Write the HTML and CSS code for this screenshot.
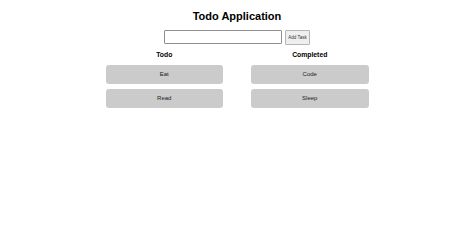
FILE: index.html
```html
<!DOCTYPE html>
<html>
<head>
<meta charset="utf-8">
<link rel="stylesheet" href="styles.css">
</head>
<body>
<div class="app">
  <h1 class="title">Todo Application</h1>
  <div class="add-row">
    <input class="task-input" type="text">
    <button class="add-btn">Add Task</button>
  </div>
  <div class="columns">
    <div class="column">
      <h2 class="col-title">Todo</h2>
      <div class="card">Eat</div>
      <div class="card">Read</div>
    </div>
    <div class="column">
      <h2 class="col-title">Completed</h2>
      <div class="card">Code</div>
      <div class="card">Sleep</div>
    </div>
  </div>
</div>
</body>
</html>
```
FILE: styles.css
```css
html, body {
  margin: 0;
  padding: 0;
  background: #ffffff;
}
body {
  font-family: "Liberation Sans", Arial, sans-serif;
  color: #000;
}
.app {
  display: flex;
  flex-direction: column;
  align-items: center;
  padding-top: 10px;
}
.title {
  margin: 0;
  font-size: 11px;
  line-height: 13px;
  font-weight: bold;
}
.add-row {
  display: flex;
  align-items: flex-start;
  gap: 3px;
  margin-top: 7px;
}
.task-input {
  box-sizing: border-box;
  width: 118px;
  height: 14px;
  margin: 0;
  padding: 0 2px;
  border: 1px solid #8f8f8f;
  border-radius: 1px;
  font-size: 6px;
}
.add-btn {
  box-sizing: border-box;
  height: 15px;
  width: 25px;
  margin: 0;
  padding: 0;
  border: 1px solid #b5b5b5;
  border-radius: 1px;
  background: #efefef;
  color: #333;
  font-family: "Liberation Sans", Arial, sans-serif;
  font-size: 4.5px;
  white-space: nowrap;
}
.columns {
  display: flex;
  gap: 28px;
  margin-top: 5px;
}
.column {
  width: 117.5px;
  display: flex;
  flex-direction: column;
  gap: 5px;
}
.col-title {
  margin: 1px 0 1px 0;
  text-align: center;
  font-size: 6.8px;
  line-height: 8px;
  font-weight: bold;
}
.card {
  box-sizing: border-box;
  height: 19px;
  line-height: 19px;
  text-align: center;
  background: #cbcbcb;
  border-radius: 3px;
  font-size: 6px;
  color: #222;
}
```
